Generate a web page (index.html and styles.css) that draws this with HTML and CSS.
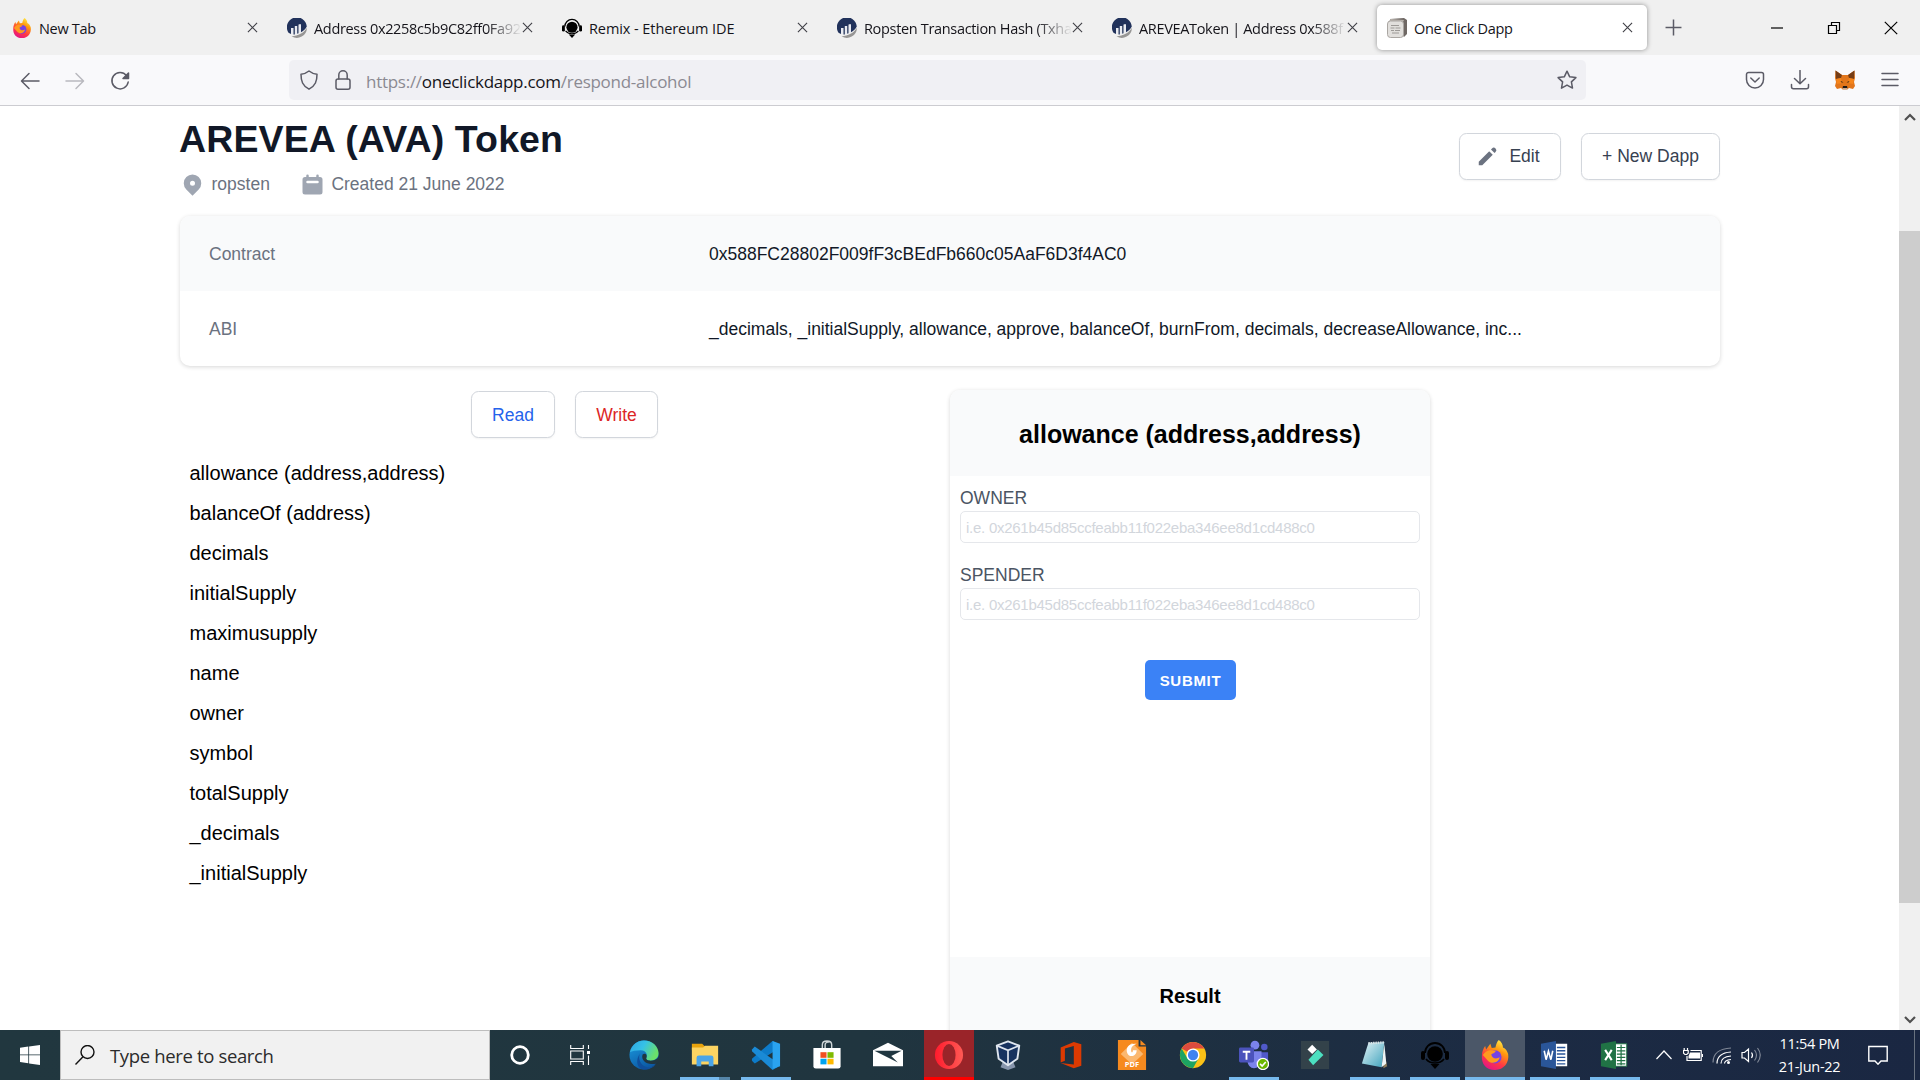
FILE: index.html
```html
<!DOCTYPE html>
<html lang="en">
<head>
<meta charset="utf-8">
<title>One Click Dapp</title>
<link rel="stylesheet" href="styles.css">
</head>
<body>
<svg class="defs" width="0" height="0">
  <defs>
    <linearGradient id="ffBody" x1="0.8" y1="0" x2="0.3" y2="1"><stop offset="0" stop-color="#fff44f"/><stop offset=".35" stop-color="#ff980e"/><stop offset=".7" stop-color="#ff3647"/><stop offset="1" stop-color="#e31587"/></linearGradient>
    <linearGradient id="edgeA" x1="0" y1="0" x2="1" y2=".4"><stop offset="0" stop-color="#2fa4e0"/><stop offset=".5" stop-color="#35c1e8"/><stop offset="1" stop-color="#6be06a"/></linearGradient>
    <linearGradient id="edgeB" x1="0" y1="0" x2=".5" y2="1"><stop offset="0" stop-color="#1b9de2"/><stop offset="1" stop-color="#0c59a4"/></linearGradient>
    <linearGradient id="operaG" x1="0" y1="0" x2="1" y2="0"><stop offset="0" stop-color="#ff1b2d"/><stop offset="1" stop-color="#ff5a55"/></linearGradient>
    <linearGradient id="noteG" x1="0" y1="0" x2="1" y2="1"><stop offset="0" stop-color="#e5f4f7"/><stop offset="1" stop-color="#3fa3bd"/></linearGradient>
    <symbol id="firefox" viewBox="0 0 32 32">
      <path fill="url(#ffBody)" d="M20 0c3 2 4.500 5 4.500 8 3 1 4.500 4 5.500 7 1.500 9-4.500 17-14 17S1.500 25.500 2 17c0-4 1.500-8 3.500-10.500L6.500 10 11 4l1.500 4.500 4-.5C17 5 18 2 20 0z"/>
      <circle cx="16" cy="18" r="7" fill="#7542e5"/>
      <path fill="#ff9a1f" d="M3 16c2-3 5-5.500 9-5l5 .5c-1 2.500-4 3-5 4 1 5 6 5 9 3-1 6-9 8-13 3z"/>
    </symbol>
    <symbol id="etherscan" viewBox="0 0 20 20">
      <path fill="#21325b" d="M1.500 14.800A10 10 0 1 1 19.800 8.500c-1.500 3-3.600 4.700-5.800 5.800V6.500h-2.500v8.800l-1.300.4V8H7.800v8.500H6.500V10H4v6z"/>
      <path fill="#979695" d="M4.500 18.200C11 18 17 15 19.900 9.800A10 10 0 0 1 4.500 18.200z"/>
      <path stroke="#e9ebf1" stroke-width="2" d="M5 10v6M9 8v8M13 6.500V15"/>
    </symbol>
    <symbol id="remix" viewBox="0 0 28 28">
      <path d="M4 12a10 10 0 0 1 20 0" fill="none" stroke="#000" stroke-width="1.800"/>
      <circle cx="14" cy="13" r="7.800"/>
      <rect y="10" width="4" height="9" rx="2"/><rect x="24" y="10" width="4" height="9" rx="2"/>
      <path d="M5 18c3 4 6 4 9 4s6 0 9-4" fill="none" stroke="#000" stroke-width="1.600"/>
      <path d="M9.500 23h9L14 28z"/>
    </symbol>
    <symbol id="close" viewBox="0 0 12 12"><path d="M1 1l10 10M11 1L1 11" fill="none" stroke="#3f3f46" stroke-width="1.200"/></symbol>
  </defs>
</svg>

<header class="tabs">
  <div class="tab"><svg class="fav"><use href="#firefox"/></svg><span class="tab-title">New Tab</span><svg class="x"><use href="#close"/></svg></div>
  <div class="tab"><svg class="fav"><use href="#etherscan"/></svg><span class="tab-title fade">Address 0x2258c5b9C82ff0Fa92</span><svg class="x"><use href="#close"/></svg></div>
  <div class="tab"><svg class="fav"><use href="#remix"/></svg><span class="tab-title wide">Remix - Ethereum IDE</span><svg class="x"><use href="#close"/></svg></div>
  <div class="tab"><svg class="fav"><use href="#etherscan"/></svg><span class="tab-title fade">Ropsten Transaction Hash (Txha</span><svg class="x"><use href="#close"/></svg></div>
  <div class="tab"><svg class="fav"><use href="#etherscan"/></svg><span class="tab-title fade">AREVEAToken | Address 0x588f</span><svg class="x"><use href="#close"/></svg></div>
  <div class="tab active">
    <svg class="fav" viewBox="0 0 20 20"><path fill="#6f6864" d="M3 1l14-1 3 2v14l-3 3z"/><path fill="#b8b2ac" d="M1 4l3-3 13 1-1 2z"/><rect x=".5" y="3" width="16" height="16.500" rx="3" fill="#e1dfdc" stroke="#aaa6a2"/><path stroke="#9d9a97" fill="none" d="M4 7.500h8M3.500 10h4m1 0h5M4 12.500h3m1 0h5M5 15h7"/></svg>
    <span class="tab-title">One Click Dapp</span><svg class="x"><use href="#close"/></svg>
  </div>
  <svg class="newtab" viewBox="0 0 16 16"><path d="M8 .5v15M.5 8h15" stroke="#5b5b66" stroke-width="1.400"/></svg>
  <div class="winctl">
    <svg viewBox="0 0 14 14"><path d="M1 7h12" stroke="#000" stroke-width="1.200"/></svg>
    <svg viewBox="0 0 14 14"><path d="M1.500 4.500h8v8h-8zM4.500 4.500v-3h8v8h-3" fill="none" stroke="#000" stroke-width="1.200"/></svg>
    <svg viewBox="0 0 14 14"><path d="M.8.8l12.400 12.400M13.200.8L.8 13.200" stroke="#000" stroke-width="1.200"/></svg>
  </div>
</header>

<nav class="toolbar">
  <div class="navbtns">
    <svg viewBox="0 0 20 20"><path d="M19 10H2M9 2.500L1.500 10 9 17.500"/></svg>
    <svg class="dim" viewBox="0 0 20 20"><path d="M1 10h17M11 2.500l7.500 7.500-7.500 7.500"/></svg>
    <svg viewBox="0 0 20 20"><path d="M16.500 4.500A8.200 8.200 0 1 0 18.200 11"/><path class="solid" d="M18.500 2v5.500H13z"/></svg>
  </div>
  <div class="urlbar">
    <svg class="shield" viewBox="0 0 20 20"><path d="M10 1c2.500 2 5 3 8 3.200 0 7-1.500 11.500-8 15-6.500-3.500-8-8-8-15C5 4 7.500 3 10 1z"/></svg>
    <svg class="lock" viewBox="0 0 20 20"><rect x="3" y="9" width="14" height="10.200" rx="2"/><path d="M5.800 9V5a4.200 4.200 0 0 1 8.400 0v4"/></svg>
    <span class="url">https://<b>oneclickdapp.com</b>/respond-alcohol</span>
    <svg class="star" viewBox="0 0 20 20"><path d="M10 1.200l2.700 5.600 6.200.8-4.500 4.300 1.100 6.200-5.500-3-5.500 3 1.100-6.200L1.100 7.600l6.200-.8z"/></svg>
  </div>
  <div class="tools">
    <svg viewBox="0 0 20 20"><path d="M3.500 2.500h13a2 2 0 0 1 2 2V9.500a8.500 8.500 0 0 1-17 0v-5a2 2 0 0 1 2-2zM5.800 8l4.200 4 4.200-4"/></svg>
    <svg viewBox="0 0 20 20"><path d="M10 .5v13M4.500 8.500L10 13.800l5.500-5.300M1.500 14.500v2.300a2 2 0 0 0 2 2h13a2 2 0 0 0 2-2v-2.300"/></svg>
    <svg class="fox" viewBox="0 0 20 20"><path fill="#e2761b" d="M.5.500L7 5h6L19.500.500 20 8l-1 4 1 4-2 3-4-1-2 1.800H8L6 18l-4 1-2-3 1-4-1-4z"/><path fill="#763d16" d="M.5.500L7 5l-1 3-5 1zM19.500.500L13 5l1 3 5 1z"/><path fill="#f6851b" d="M6 8L1 9l1 5 5-1zM14 8l5 1-1 5-5-1z"/><path fill="#1f1a17" d="M5.500 11l3 1.200-2 .4zM14.500 11l-3 1.200 2 .4zM8 16h4l.5 2.300h-5z"/><path fill="#d7c1b3" d="M7.500 18.300h5L12 19.800H8z"/></svg>
    <svg viewBox="0 0 20 20"><path d="M2 3.500h16M2 9.500h16M2 15.500h16"/></svg>
  </div>
</nav>

<div class="viewport">
  <main class="page">
    <div class="head">
      <div>
        <h1>AREVEA (AVA) Token</h1>
        <div class="meta">
          <svg viewBox="0 0 20 20"><path fill-rule="evenodd" d="M5.050 4.050a7 7 0 119.900 9.900L10 18.900l-4.950-4.950a7 7 0 010-9.900zM10 11a2 2 0 100-4 2 2 0 000 4z"/></svg><span class="net">ropsten</span>
          <svg viewBox="0 0 20 20"><path fill-rule="evenodd" d="M6 2a1 1 0 00-1 1v1H4a2 2 0 00-2 2v10a2 2 0 002 2h12a2 2 0 002-2V6a2 2 0 00-2-2h-1V3a1 1 0 10-2 0v1H7V3a1 1 0 00-1-1zm0 5a1 1 0 000 2h8a1 1 0 100-2H6z"/></svg><span>Created 21 June 2022</span>
        </div>
      </div>
      <div class="actions">
        <button class="btn edit"><svg viewBox="0 0 20 20"><path d="M13.586 3.586a2 2 0 112.828 2.828l-.793.793-2.828-2.828.793-.793zM11.379 5.793L3 14.172V17h2.828l8.380-8.379-2.830-2.828z"/></svg>Edit</button>
        <button class="btn new">+ New Dapp</button>
      </div>
    </div>

    <dl class="info">
      <div class="row"><dt>Contract</dt><dd>0x588FC28802F009fF3cBEdFb660c05AaF6D3f4AC0</dd></div>
      <div class="row"><dt>ABI</dt><dd>_decimals, _initialSupply, allowance, approve, balanceOf, burnFrom, decimals, decreaseAllowance, inc...</dd></div>
    </dl>

    <div class="cols">
      <section class="methods">
        <div class="modes"><button class="btn read">Read</button><button class="btn write">Write</button></div>
        <ul>
          <li>allowance (address,address)</li><li>balanceOf (address)</li><li>decimals</li><li>initialSupply</li><li>maximusupply</li><li>name</li><li>owner</li><li>symbol</li><li>totalSupply</li><li>_decimals</li><li>_initialSupply</li>
        </ul>
      </section>
      <section class="form">
        <h2>allowance (address,address)</h2>
        <div class="fields">
          <label>OWNER<input placeholder="i.e. 0x261b45d85ccfeabb11f022eba346ee8d1cd488c0"></label>
          <label>SPENDER<input placeholder="i.e. 0x261b45d85ccfeabb11f022eba346ee8d1cd488c0"></label>
          <button class="submit">SUBMIT</button>
        </div>
        <h3>Result</h3>
      </section>
    </div>
  </main>
  <div class="scroll">
    <svg viewBox="0 0 12 8"><path d="M1 7l5-5 5 5"/></svg>
    <div class="thumb"></div>
    <svg class="down" viewBox="0 0 12 8"><path d="M1 1l5 5 5-5"/></svg>
  </div>
</div>

<footer class="taskbar">
  <div class="start"><svg viewBox="0 0 20 20"><path fill="#fff" d="M0 2.800L8.300 1.600v7.900H0zM9.100 1.500L20 0v9.500H9.100zM0 10.300h8.300v7.900L0 17.100zM9.100 10.300H20V20L9.100 18.400z"/></svg></div>
  <div class="search"><svg viewBox="0 0 20 20"><circle cx="12.500" cy="7" r="6.500"/><path d="M8 11.800L.5 19.500"/></svg><span>Type here to search</span></div>
  <div class="slot cortana"><svg viewBox="0 0 20 20"><circle cx="10" cy="10" r="8.300" fill="none" stroke="#fff" stroke-width="2.800"/></svg></div>
  <div class="slot view"><svg viewBox="0 0 20 20"><path d="M.7 0v3.500h12.600V0M.7 20v-3.500h12.600V20M.7 6h12.600v8H.7zM18.500 0v4M18.500 10.500V20" fill="none" stroke="#fff" stroke-width="1.100"/><path fill="#fff" d="M17 6h3v3h-3z"/></svg></div>

  <div class="slot"><svg viewBox="0 0 32 32"><circle cx="16" cy="16" r="15.500" fill="url(#edgeB)"/><path fill="url(#edgeA)" d="M1 13C3 5 9 .500 16 .500c9 0 15.500 6.500 15.500 13.500 0 5-4 8-8.500 8-4 0-5.500-1.500-4.500-3 1.500-3 0-8-6-8C7 11 3 12 1 13z"/><path fill="#0f4f9c" d="M12 14c-3 5 0 13 7 15 4 1 8-1 10.500-4-3 4-8 7-14 6.500C9 30.500 6 22 12 14z"/><path fill="#203640" d="M14.500 15.500c3-2 5 .5 4.200 3-1 2.500 1 3.600 4.300 3.600 3.500 0 6-1 9-4v5c-1.500 2-4.500 2.600-8 2.600-6 0-11.500-4.700-9.500-10.200z"/></svg></div>
  <div class="slot open split"><svg viewBox="0 0 32 32"><path fill="#e8a30c" d="M2 4h11l3 3v4H2z"/><path fill="#fcd462" d="M2 8h12l2-2h14v20H2z"/><path fill="#4ba5e8" d="M7 28V19q0-2.500 2.500-2.500h13Q25 16.500 25 19v9h-5v-5h-8v5z"/></svg></div>
  <div class="slot open"><svg viewBox="0 0 32 32"><path fill="#0d7bc9" d="M23 1l5 3v6L4 25l-3-3v-2z"/><path fill="#1a8ad6" d="M1 12v-2l3-3 24 17v5l-5 3z"/><path fill="#2aa3f0" d="M23 1l8 3v24l-8 3z"/></svg></div>
  <div class="slot"><svg viewBox="0 0 32 32"><path d="M11 10V5q0-4 5-4t5 4v5M14 10V5q0-3 5-3" fill="none" stroke="#cfd6d8" stroke-width="1.500"/><path fill="#fff" d="M1.500 8.500h29V28a2.500 2.500 0 0 1-2.500 2.500H4A2.500 2.500 0 0 1 1.500 28z"/><path fill="#f25022" d="M9 13h6.500v6H9z"/><path fill="#7fba00" d="M16.500 13H23v6h-6.500z"/><path fill="#00a4ef" d="M9 20h6.500v6H9z"/><path fill="#ffb900" d="M16.500 20H23v6h-6.500z"/></svg></div>
  <div class="slot"><svg viewBox="0 0 32 32"><path fill="#fff" d="M0 11L16 3l16 8v17H0z"/><path fill="#203640" d="M1.500 11.500h29L19.500 17 26.500 24z"/></svg></div>
  <div class="slot opera"><svg viewBox="0 0 32 32"><ellipse cx="16" cy="16" rx="15" ry="15" fill="url(#operaG)"/><ellipse cx="16" cy="16" rx="7" ry="11.800" fill="#9a2429"/></svg></div>
  <div class="slot vbox"><svg viewBox="0 0 32 32"><path fill="#8795ac" d="M11 22l5 2 5-2 3 7-8 3-8-3z"/><path fill="#17325f" stroke="#dfe6ef" stroke-width="2" stroke-linejoin="round" d="M16 1.500L28 6l-2 14-10 7L6 20 4 6z"/><path d="M4 6l12 5 12-5M16 11v16" fill="none" stroke="#dfe6ef" stroke-width="1.800"/></svg></div>
  <div class="slot"><svg viewBox="0 0 32 32"><path fill="#dc3a02" d="M5 8L19 2l8 2.500v23L19 30 5 24.500l14 1.500V6.500L9.500 9v13L5 24z"/></svg></div>
  <div class="slot"><svg viewBox="0 0 32 32"><path fill="#f68a1f" d="M1 0h22v7h8v25H1z"/><path fill="#f68a1f" d="M25 0l6 5.500h-6z"/><path fill="#fbb870" d="M16 3l12 12-12 11L4 15z"/><path d="M21 4c-9-1-12 5-10 10s10 4 10-3h-4c0 3-2 3-2 0 0-4 3-6 6-7z" fill="#fff"/><text x="16" y="29" text-anchor="middle" class="pdf">PDF</text></svg></div>
  <div class="slot"><svg viewBox="0 0 32 32"><circle cx="16" cy="16" r="14" fill="#fbc116"/><path fill="#dd4b3e" d="M16 16L3.900 9A14 14 0 0 1 28.100 9H16z"/><path fill="#1da462" d="M3.900 9A14 14 0 0 0 16 30l6-10.500-6 3-6-3z"/><circle cx="16" cy="16" r="7" fill="#fff"/><circle cx="16" cy="16" r="5.500" fill="#3f83f0"/></svg></div>
  <div class="slot open"><svg viewBox="0 0 32 32"><circle cx="17" cy="5.500" r="4.700" fill="#7b83eb"/><circle cx="27" cy="7.500" r="3.500" fill="#5059c9"/><path fill="#5059c9" d="M22 13h9v9a6 6 0 0 1-9 4z"/><path fill="#7b83eb" d="M9 12h15v11q-2 7-8 7t-7-7z"/><rect y="8" width="16" height="16" rx="1.500" fill="#4b53bc"/><path d="M4 12.500h8M8 12.500V21" stroke="#fff" stroke-width="2"/><circle cx="25.500" cy="25.500" r="6" fill="#6bb700" stroke="#fff" stroke-width="1.400"/><path d="M22.500 25.500l2.200 2.300 3.800-4.300" fill="none" stroke="#fff" stroke-width="1.700"/></svg></div>
  <div class="slot"><svg viewBox="0 0 32 32"><path fill="#33424a" d="M1 1h30v30H1z"/><path fill="#fff" d="M13 5l5 5-5 5-5-5z"/><path fill="#4ce0c0" d="M19 10l6 6-11 11-5-6z"/></svg></div>
  <div class="slot n open"><svg viewBox="0 0 32 32"><path fill="#8b7a5a" d="M24 4l5 24-4 2z"/><path fill="url(#noteG)" d="M9 3l17-1-3 27L2 25z"/><path fill="#eef5f6" d="M26 4l2 21-5 4z"/><path d="M9 3.500l17-1" stroke="#d9e3e6" stroke-width="2.500" stroke-dasharray="1.500 1"/></svg></div>
  <div class="slot n open"><svg class="rmx"><use href="#remix"/></svg></div>
  <div class="slot n open current"><svg><use href="#firefox"/></svg></div>
  <div class="slot n open"><svg viewBox="0 0 32 32"><path fill="#fff" d="M16 4h13v24H16z"/><path d="M18 8h9M18 11.500h9M18 15h9M18 18.500h9M18 22h9M18 25.500h9" stroke="#2a5699" stroke-width="1.500"/><path fill="#2a5699" d="M1 4l16-3v30L1 28z"/><path d="M4.500 11.500l2 9.500L9 12l2.600 9 2-9.500" fill="none" stroke="#fff" stroke-width="1.700"/></svg></div>
  <div class="slot n open"><svg viewBox="0 0 32 32"><path fill="#fff" stroke="#207245" d="M16 4h12.500v24H16z"/><path d="M18 8h9M18 11.500h9M18 15h9M18 18.500h9M18 22h9M18 25.500h9M22.500 5v22" stroke="#207245" stroke-width="1.300"/><path fill="#207245" d="M1 4l16-3v30L1 28z"/><path d="M5.500 10.500l7 11M12.500 10.500l-7 11" stroke="#fff" stroke-width="2.200"/></svg></div>

  <div class="tray">
    <svg viewBox="0 0 20 20"><path d="M2.500 14L10 6l7.500 8"/></svg>
    <svg viewBox="0 0 20 20"><path fill="#fff" stroke="none" d="M7 7.500h10v6H5.500V11z"/><path d="M7.500 5.500H18.200v10H4V11M19.600 9v3M1.200 3v2.500M4.500 3v2.500M.5 5.500h4.700v2.700l-1.500 1.300H2L.5 8.200z"/></svg>
    <svg viewBox="0 0 20 20"><path class="faint" d="M1 17.500C1 8.500 8 3.500 19 3"/><path d="M5 18.500C5 11 11 7.500 19 7M9 18.500c0-4.500 4-7 10-7.500M12.500 18.500c0-2 2.500-3.500 6.500-4"/><circle cx="16.500" cy="17.500" r="1.500" fill="#fff" stroke="none"/></svg>
    <svg viewBox="0 0 20 20"><path d="M1 7.500h2.500L7.500 4v12.500L3.500 13H1zM10.500 7.500q2 2.500 0 5.500"/><path class="faint" d="M13.500 5q4 5 0 10.500M16.500 3q5.500 7 0 14.500"/></svg>
  </div>
  <div class="clock"><span>11:54 PM</span><span>21-Jun-22</span></div>
  <div class="notif"><svg viewBox="0 0 20 20"><path d="M.8 1.500h18.400v14.500h-6.200L10 19.200 7 16H.8z"/></svg></div>
</footer>
</body>
</html>
```
FILE: styles.css
```css
* { box-sizing: border-box; }
body { margin: 0; width: 1920px; height: 1080px; overflow: hidden; background: #fff; font-family: "Liberation Sans", Arial, sans-serif; display: flex; flex-direction: column; }
svg { display: block; flex: none; }
.defs { position: absolute; }
h1, h2, h3, ul, dl, dd { margin: 0; padding: 0; }

/* browser tabs */
.tabs { height: 55px; flex: none; background: #f0f0f0; display: flex; align-items: center; padding-left: 2px; gap: 5px; font-family: "Open Sans", "Noto Sans", sans-serif; }
.tab { width: 270px; height: 45px; border-radius: 5px; display: flex; align-items: center; padding: 0 14px 0 10px; font-size: 14.500px; color: #15141a; }
.tab.active { background: #fff; box-shadow: 0 0 5px rgba(0, 0, 0, .4); }
.fav { width: 20px; height: 20px; margin-right: 7px; }
.tab-title { flex: 1; white-space: nowrap; letter-spacing: -.33px; padding-top: 2px; }
.tab-title.wide { letter-spacing: -.08px; }
.fade { -webkit-mask-image: linear-gradient(90deg, #000 172px, transparent 208px); mask-image: linear-gradient(90deg, #000 172px, transparent 208px); min-width: 0; width: 208px; }
.x { width: 11px; height: 11px; }
.newtab { width: 17px; height: 17px; margin-left: 13px; }
.winctl { flex: 1; display: flex; justify-content: flex-end; gap: 43px; padding-right: 22px; }
.winctl svg { width: 14px; height: 14px; }

/* address row */
.toolbar { height: 51px; flex: none; background: #f9f9fb; border-bottom: 1px solid #ccccd1; display: flex; align-items: center; }
.toolbar svg { width: 20px; height: 20px; fill: none; stroke: #5b5b66; stroke-width: 1.500; stroke-linejoin: round; stroke-linecap: round; }
.navbtns { width: 289px; display: flex; gap: 25px; padding: 1px 0 0 20px; }
.navbtns .dim { opacity: .4; }
.toolbar .navbtns .solid { fill: #5b5b66; }
.urlbar { width: 1297px; height: 40px; border-radius: 5px; background: #f0f0f4; display: flex; align-items: center; padding: 0 9px 0 10px; font-family: "Open Sans", "Noto Sans", sans-serif; }
.urlbar .shield { margin-right: 14px; }
.urlbar .lock { margin-right: 13px; }
.url { flex: 1; font-size: 17px; letter-spacing: -.27px; color: #8b8a92; white-space: nowrap; padding-top: 2px; }
.url b { font-weight: 400; color: #15141a; }
.tools { display: flex; gap: 25px; margin-left: 159px; }
.toolbar .fox { stroke: none; }

/* page */
.viewport { flex: 1; min-height: 0; display: flex; }
.page { width: 1899px; padding: 0 179px 0 180px; overflow: hidden; }
.head { display: flex; justify-content: space-between; height: 110px; }
h1 { font-size: 37.500px; line-height: 45px; font-weight: 700; color: #111827; margin: 11px 0 0 -1px; letter-spacing: .12px; }
.meta { display: flex; align-items: center; color: #6b7280; font-size: 17.500px; line-height: 25px; margin-top: 9px; }
.meta svg { width: 25px; height: 25px; fill: #9fa6b2; margin-right: 6.500px; }
.meta span { padding-top: 1px; }
.meta .net { margin-right: 30px; }
.actions { display: flex; gap: 20px; padding-top: 27px; }
.btn { font: 17.500px/25px "Liberation Sans", Arial, sans-serif; height: 47px; border: 1px solid #d2d6dc; border-radius: 7.500px; background: #fff; color: #374151; padding: 0 20px; box-shadow: 0 1px 2px rgba(0, 0, 0, .05); display: flex; align-items: center; justify-content: center; white-space: nowrap; }
.edit { width: 102px; padding: 0 20px 0 15px; }
.edit svg { width: 25px; height: 25px; fill: #6b7280; margin-right: 9px; }
.new { width: 139px; }
.info { height: 150px; border-radius: 10px; overflow: hidden; box-shadow: 0 1px 4px rgba(0, 0, 0, .16); }
.row { height: 75px; display: grid; grid-template-columns: 500px 1fr; align-items: center; padding: 2px 30px 0 29px; font-size: 17.500px; }
.row:first-child { background: #f9fafb; }
.row dt { color: #6b7280; }
.row dd { color: #111827; white-space: nowrap; }
.cols { display: grid; grid-template-columns: 770px 480px; margin-top: 24px; }
.modes { display: flex; gap: 20px; margin: 1px 0 0 291px; }
.modes .btn { padding-top: 1px; }
.read { width: 84px; }
.modes .read { color: #2563eb; }
.write { width: 83px; }
.modes .write { color: #dc2626; }
.methods ul { list-style: none; margin-top: 15px; }
.methods li { height: 40px; line-height: 40px; padding-left: 9.500px; font-size: 20px; color: #000; }
.form { height: 700px; border-radius: 10px; box-shadow: 0 1px 4px rgba(0, 0, 0, .16); }
.form h2 { height: 86px; line-height: 88px; border-radius: 10px 10px 0 0; background: #f9fafb; text-align: center; font-size: 25px; color: #000; }
.fields { height: 481px; padding: 10px; }
.fields label { display: block; height: 77px; font-size: 17.500px; line-height: 25px; color: #4b5563; }
.fields input { display: block; width: 460px; height: 32px; border: 1px solid #e5e7eb; border-radius: 5px; padding: 0 5px; font: 15px "Liberation Sans", Arial, sans-serif; letter-spacing: -.26px; }
.fields input::placeholder { color: #d2d6dc; opacity: 1; }
.submit { display: block; margin: 20px auto 0; width: 91px; height: 40px; border: 0; border-radius: 5px; background: #3b82f6; color: #fff; font: 700 15px "Liberation Sans", Arial, sans-serif; letter-spacing: .7px; padding: 0 0 0 1px; }
.form h3 { height: 130px; background: #f9fafb; text-align: center; font-size: 20px; line-height: 78px; color: #000; }
.scroll { width: 21px; background: #f0f0f0; display: flex; flex-direction: column; align-items: center; padding: 7px 0 6px; }
.scroll svg { width: 12px; height: 8px; fill: none; stroke: #505050; stroke-width: 2.200; }
.scroll .thumb { width: 21px; height: 672px; margin-top: 110px; background: #cdcdcd; }
.scroll .down { margin-top: auto; }

/* taskbar */
.taskbar { height: 50px; flex: none; display: flex; background: linear-gradient(90deg, #21373f, #20353f 45%, #1c2b43 78%, #1a2742); color: #fff; font-family: "Open Sans", "Noto Sans", sans-serif; }
.start { width: 60px; display: flex; align-items: center; justify-content: center; }
.start svg { width: 20px; height: 20px; }
.search { width: 430px; background: #f1f1f1; border: 1px solid #bdbdbd; display: flex; align-items: center; gap: 15px; padding-left: 14px; font-size: 18.500px; letter-spacing: -.35px; color: #2b2b2b; }
.search svg { width: 20px; height: 20px; fill: none; stroke: #111; stroke-width: 1.400; }
.slot { width: 61px; display: flex; align-items: center; justify-content: center; flex: none; }
.slot.n { width: 60px; }
.slot.cortana { width: 60px; }
.slot.view { width: 63px; padding-right: 3px; }
.slot.vbox { padding-right: 4px; }
.slot svg { width: 30px; height: 30px; }
.slot.cortana svg, .slot.view svg { width: 20px; height: 20px; }
.slot .rmx { width: 28px; height: 28px; }
.open { background: linear-gradient(#76b9ed, #76b9ed) center bottom / 50px 3px no-repeat; }
.open.split { background: linear-gradient(90deg, #76b9ed 39px, #5585a8 39px) center bottom / 50px 3px no-repeat; }
.opera { background: linear-gradient(#f00, #f00) center bottom / 50px 3px no-repeat, linear-gradient(#9a2429, #9a2429) center / 50px 100% no-repeat; }
.current { background: linear-gradient(#76b9ed, #76b9ed) center bottom / 60px 3px no-repeat, #4b5768; }
.pdf { font: 700 8px "Open Sans", sans-serif; fill: #fff; }
.tray { display: flex; align-items: center; gap: 9px; padding-left: 9px; }
.tray svg { width: 20px; height: 20px; fill: none; stroke: #fff; stroke-width: 1.200; }
.tray .faint { opacity: .45; }
.clock { width: 98px; display: flex; flex-direction: column; align-items: center; font-size: 14.500px; line-height: 23px; letter-spacing: -.3px; padding: 2px 1px 0 0; }
.notif { flex: 1; margin-right: 5px; border-right: 1px solid #68727f; display: flex; align-items: center; padding-left: 9px; }
.notif svg { width: 20px; height: 20px; fill: none; stroke: #fff; stroke-width: 1.400; }
```
